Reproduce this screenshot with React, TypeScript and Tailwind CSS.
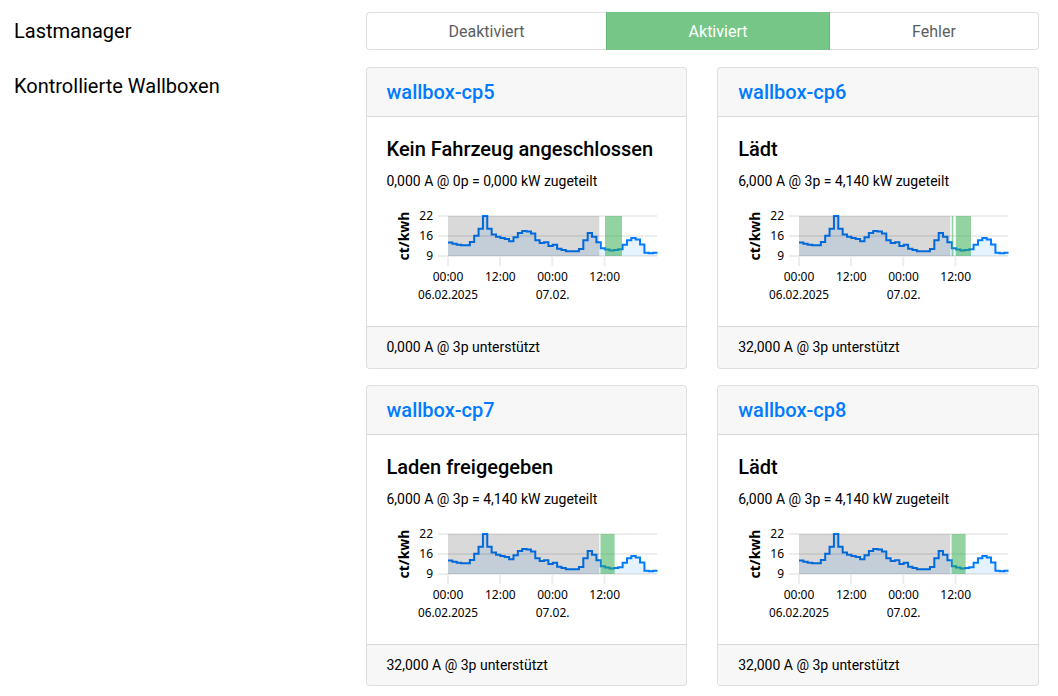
type Band = [start: number, end: number];

interface Wallbox {
  name: string;
  state: string;
  allocated: string;
  supported: string;
  bands: Band[];
}

const wallboxes: Wallbox[] = [
  { name: "wallbox-cp5", state: "Kein Fahrzeug angeschlossen", allocated: "0,000 A @ 0p = 0,000 kW zugeteilt", supported: "0,000 A @ 3p unterstützt", bands: [[218, 235]] },
  { name: "wallbox-cp6", state: "Lädt", allocated: "6,000 A @ 3p = 4,140 kW zugeteilt", supported: "32,000 A @ 3p unterstützt", bands: [[213.7, 215.4], [217.8, 233]] },
  { name: "wallbox-cp7", state: "Laden freigegeben", allocated: "6,000 A @ 3p = 4,140 kW zugeteilt", supported: "32,000 A @ 3p unterstützt", bands: [[213.5, 227.6]] },
  { name: "wallbox-cp8", state: "Lädt", allocated: "6,000 A @ 3p = 4,140 kW zugeteilt", supported: "32,000 A @ 3p unterstützt", bands: [[213.5, 227.6]] },
];

// Vertical position of the hourly price in the chart, one entry for each hour.
const prices = [
  42.5, 43.7, 44.7, 45.2, 45.2, 42, 35.7, 28.7, 16, 28.7, 34.4, 36.7, 38, 39, 41.3, 37.3,
  33, 31, 31.4, 33.4, 40.3, 43, 42.3, 46, 44.7, 48.7, 50, 51.3, 51.3, 51.3, 49, 40.3,
  33, 36.7, 42.3, 48.3, 49.5, 50.5, 50, 49.3, 44.7, 40.3, 38, 39.4, 44.4, 52.7, 53.2, 52.7,
];

const LEFT = 61;
const HOUR = 4.365;

const line = prices
  .map((y, i) => `${i === 0 ? "M" : "L"}${LEFT + i * HOUR} ${y}H${LEFT + (i + 1) * HOUR}`)
  .join("");
const area = `${line}V56H${LEFT}Z`;

function PriceChart({ bands }: { bands: Band[] }) {
  return (
    <svg width="279" height="110" className="block shrink-0 font-['Noto_Sans',sans-serif] text-[12px]">
      <path d={area} fill="#007bff" fillOpacity="0.1" />
      <path d="M51 16H270M51 36H270M51 56H270M61 56V66M113 56V66M165.3 56V66M217.5 56V66" stroke="#000" strokeOpacity="0.07" strokeWidth="2" fill="none" />
      <path d={line} stroke="#007bff" strokeWidth="2" fill="none" />
      <rect x="61" y="16" width="151.3" height="40" fill="#000" fillOpacity="0.15" />
      {bands.map(([a, b]) => (
        <rect key={a} x={a} y="16" width={b - a} height="40" fill="#28a745" fillOpacity="0.5" />
      ))}
      <text transform="translate(22 36) rotate(-90)" textAnchor="middle" className="text-[14px] font-bold">ct/kwh</text>
      <g textAnchor="end">
        <text x="46" y="20">22</text>
        <text x="46" y="40">16</text>
        <text x="46" y="60">9</text>
      </g>
      <g textAnchor="middle">
        <text x="61" y="81">00:00</text>
        <text x="113.3" y="81">12:00</text>
        <text x="165.5" y="81">00:00</text>
        <text x="217.7" y="81">12:00</text>
        <text x="61" y="99" textLength="60" lengthAdjust="spacingAndGlyphs">06.02.2025</text>
        <text x="165.6" y="99">07.02.</text>
      </g>
    </svg>
  );
}

function WallboxCard({ box }: { box: Wallbox }) {
  return (
    <article className="flex h-[301.6px] flex-col overflow-hidden rounded border border-black/[.125] bg-white">
      <header className="h-[49px] border-b border-black/[.125] bg-black/[.03] px-5 py-3">
        <a href="#" className="block text-[20px] leading-6 font-medium text-[#007bff]">{box.name}</a>
      </header>
      <div className="flex-1 px-5 pt-5">
        <h2 className="text-[20px] leading-6 font-medium">{box.state}</h2>
        <p className="mt-[9px] mb-[8px] h-[22px] text-[14px] leading-[22px]">{box.allocated}</p>
        <PriceChart bands={box.bands} />
      </div>
      <footer className="h-[41.6px] border-t border-black/[.125] bg-black/[.03] px-5 pt-[10px] text-[14px] leading-[21px]">
        {box.supported}
      </footer>
    </article>
  );
}

export default function App() {
  return (
    <main className="h-[696px] overflow-hidden bg-white pt-3 pr-[19px] pl-[14px] font-[Roboto,sans-serif] text-black">
      <section className="grid grid-cols-[352px_1fr]">
        <h1 className="pt-1 text-[20px] leading-[30px]">Lastmanager</h1>
        <div className="flex h-[38px] text-center text-[16px] leading-[37px] text-[#5b5e61]">
          <div className="w-[240px] rounded-l border border-r-0 border-[#dfdfdf]">Deaktiviert</div>
          <div className="w-[224px] border border-[#66b878] border-y-[#73c686] bg-[#75c687] text-white">Aktiviert</div>
          <div className="flex-1 rounded-r border border-l-0 border-[#dfdfdf]">Fehler</div>
        </div>
      </section>
      <section className="mt-[17px] grid grid-cols-[351.5px_1fr]">
        <h1 className="pt-1 text-[20px] leading-[30px]">Kontrollierte Wallboxen</h1>
        <div className="grid grid-cols-2 gap-x-[30px] gap-y-4">
          {wallboxes.map((box) => (
            <WallboxCard key={box.name} box={box} />
          ))}
        </div>
      </section>
    </main>
  );
}
